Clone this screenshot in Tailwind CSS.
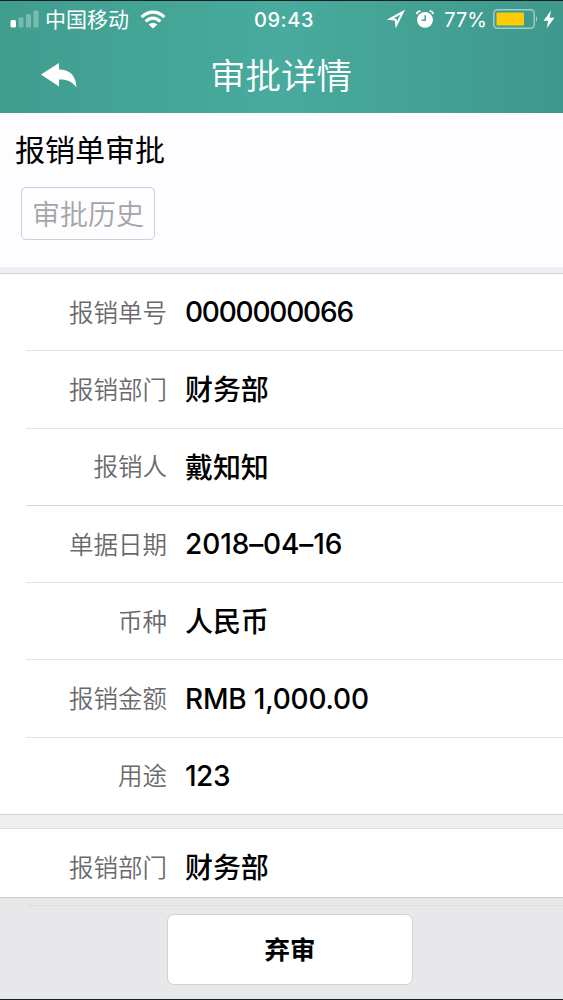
<!DOCTYPE html>
<html lang="zh-CN">
<head>
    <meta charset="UTF-8">
    <meta name="viewport" content="width=device-width, initial-scale=1.0">
    <title>审批详情</title>
    <!-- Tailwind CSS -->
    <script src="https://cdn.jsdelivr.net/npm/@tailwindcss/browser@4"></script>
    <style>
        * {
            font-family: Inter, 'Noto Sans CJK SC', sans-serif;
        }
    </style>
</head>
<body class="bg-[#efeef1] w-[563px] h-[1000px] overflow-hidden flex flex-col border-t border-b border-[#17201f] text-black">
    <!-- Header -->
    <header class="h-[112px] shrink-0 bg-linear-to-r from-[#3f9d8e] via-[#48ab9d] to-[#3f988b] text-white">
        <!-- Status bar -->
        <div class="h-[36px] flex items-center pl-[10px] pr-[8px]">
            <div class="flex-1 flex items-center">
                <svg class="w-[29px] h-[18px] shrink-0" viewBox="0 0 29 18" fill="currentColor">
                    <rect x="0.5" y="10" width="5.5" height="7.5" rx="1.5"/>
                    <rect x="8.5" y="7.5" width="5" height="10" rx="1" opacity=".3"/>
                    <rect x="16" y="4" width="5" height="13.5" rx="1" opacity=".3"/>
                    <rect x="23.5" y="0.5" width="5" height="17" rx="1" opacity=".3"/>
                </svg>
                <span class="ml-[6px] pt-px text-[21px] leading-none whitespace-nowrap">中国移动</span>
                <svg class="ml-[11px] w-[26px] h-[19px] shrink-0" viewBox="0 0 26 19" fill="none" stroke="currentColor" stroke-width="3.2">
                    <path d="M1.6 7.2Q7 2.2 13 2.2T24.4 7.2"/>
                    <path d="M5.7 11.5Q9 8.1 13 8.1T20.3 11.5"/>
                    <path d="M8.6 14.6Q13 10.8 17.4 14.6L13 18.4Z" fill="currentColor" stroke="none"/>
                </svg>
            </div>
            <span class="pl-[3px] pt-px text-[20px] font-medium leading-none tracking-[0.6px]">09:43</span>
            <div class="flex-1 flex items-center justify-end">
                <svg class="w-[18px] h-[18px]" viewBox="0 0 18 18" fill="none" stroke="currentColor" stroke-width="2" stroke-linejoin="miter">
                    <path d="M15.700 2.200 3.200 9 8.600 9.600 9.300 15Z"/>
                </svg>
                <svg class="ml-[11px] w-[18px] h-[18px]" viewBox="0 0 18 18" fill="currentColor">
                    <circle cx="9" cy="9.8" r="7.9"/>
                    <path d="M0.6 4.2Q1 1.3 4.400 0.900M17.400 4.200Q17 1.300 13.600 .9" fill="none" stroke="currentColor" stroke-width="1.8"/>
                    <path d="M9.2 5.3V10.3H5.6" fill="none" stroke="#45a395" stroke-width="1.5"/>
                </svg>
                <span class="ml-[10px] pt-px text-[20px] leading-none">77%</span>
                <svg class="ml-[6px] w-[46px] h-[20px]" viewBox="0 0 46 20">
                    <rect x=".8" y=".8" width="40.4" height="18.4" rx="3.5" fill="none" stroke="#fff" stroke-opacity=".5" stroke-width="1.5"/>
                    <rect x="3.5" y="3.5" width="27.5" height="13" rx="1" fill="#fdcb05"/>
                    <path d="M43 7Q45.6 10 43 13Z" fill="#fff" fill-opacity=".5"/>
                </svg>
                <svg class="ml-[4px] w-[12px] h-[19px]" viewBox="0 0 12 19" fill="currentColor">
                    <path d="M8 0.5.5 10.7H5.2L3.7 18.3 11.5 7.8H6.6Z"/>
                </svg>
            </div>
        </div>
        <!-- Title bar -->
        <div class="h-[76px] flex items-center">
            <a href="#" class="w-[210px] pl-[41px]">
                <svg class="w-[36px] h-[26px]" viewBox="0 0 36 26" fill="currentColor">
                    <path d="M0 12.5 18 1V7.6C29.500 7.600 35 14.500 35.500 25.500 31 19.500 26 17.300 18 17.500V24.500Z"/>
                </svg>
            </a>
            <h1 class="pt-[4px] text-[35.500px] font-[350] leading-none">审批详情</h1>
        </div>
    </header>

    <main class="flex-1 min-h-0 overflow-hidden">
        <!-- Summary -->
        <section class="h-[154px] bg-[#fdfcfe] pl-[15px] pt-[19px]">
            <h2 class="text-[30px] leading-[36px]">报销单审批</h2>
            <button class="mt-[19px] ml-[6px] w-[134px] h-[53px] pt-[2px] flex items-center justify-center rounded-[5px] border border-[#cfced0] text-[28px] leading-none font-[350] text-[#a5a5a7]">审批历史</button>
        </section>

        <!-- Details -->
        <section class="mt-[6px] h-[542px] border-y border-[#d0cfd2] bg-white flex flex-col text-[28px] font-medium tracking-[-0.1px]">
            <div class="flex-1 flex items-center ml-[26px] border-b border-[#e3e3e5]">
                <span class="w-[141px] mr-[18px] pt-[2px] text-right text-[24.500px] font-[350] tracking-normal text-[#6a6a6e]">报销单号</span>
                <span class="tracking-[-1.2px]">0000000066</span>
            </div>
            <div class="flex-1 flex items-center ml-[26px] border-b border-[#e3e3e5]">
                <span class="w-[141px] mr-[18px] pt-[2px] text-right text-[24.500px] font-[350] tracking-normal text-[#6a6a6e]">报销部门</span>
                <span class="pt-[2px]">财务部</span>
            </div>
            <div class="flex-1 flex items-center ml-[26px] border-b border-[#d5d5d8]">
                <span class="w-[141px] mr-[18px] pt-[2px] text-right text-[24.500px] font-[350] tracking-normal text-[#6a6a6e]">报销人</span>
                <span class="pt-[2px]">戴知知</span>
            </div>
            <div class="flex-1 flex items-center ml-[26px] border-b border-[#e3e3e5]">
                <span class="w-[141px] mr-[18px] pt-[2px] text-right text-[24.500px] font-[350] tracking-normal text-[#6a6a6e]">单据日期</span>
                <span class="tracking-[-0.1px]">2018–04–16</span>
            </div>
            <div class="flex-1 flex items-center ml-[26px] border-b border-[#e3e3e5]">
                <span class="w-[141px] mr-[18px] pt-[2px] text-right text-[24.500px] font-[350] tracking-normal text-[#6a6a6e]">币种</span>
                <span class="pt-[2px]">人民币</span>
            </div>
            <div class="flex-1 flex items-center ml-[26px] border-b border-[#e3e3e5]">
                <span class="w-[141px] mr-[18px] pt-[2px] text-right text-[24.500px] font-[350] tracking-normal text-[#6a6a6e]">报销金额</span>
                <span class="tracking-[-0.2px]">RMB 1,000.00</span>
            </div>
            <div class="flex-1 flex items-center ml-[26px]">
                <span class="w-[141px] mr-[18px] pt-[2px] text-right text-[24.500px] font-[350] tracking-normal text-[#6a6a6e]">用途</span>
                <span class="tracking-[-0.5px]">123</span>
            </div>
        </section>

        <!-- Expense lines -->
        <section class="mt-[13px] border-t border-[#dddcdf] bg-white text-[28px] font-medium tracking-[-0.1px]">
            <div class="h-[77px] flex items-center ml-[26px]">
                <span class="w-[141px] mr-[18px] pt-[2px] text-right text-[24.500px] font-[350] tracking-normal text-[#6a6a6e]">报销部门</span>
                <span class="pt-px">财务部</span>
            </div>
        </section>
    </main>

    <!-- Action bar -->
    <footer class="h-[102px] shrink-0 bg-[#e8e7ea] border-t border-[#cccbce]">
        <div class="mt-[7px] ml-[28px] border-t border-[#dddcdf]"></div>
        <button class="mt-[8px] ml-[167px] w-[246px] h-[71px] pt-px flex items-center justify-center rounded-[7px] border border-[#d2d1d4] bg-white text-[25.500px] leading-none font-bold">弃审</button>
    </footer>
</body>
</html>
